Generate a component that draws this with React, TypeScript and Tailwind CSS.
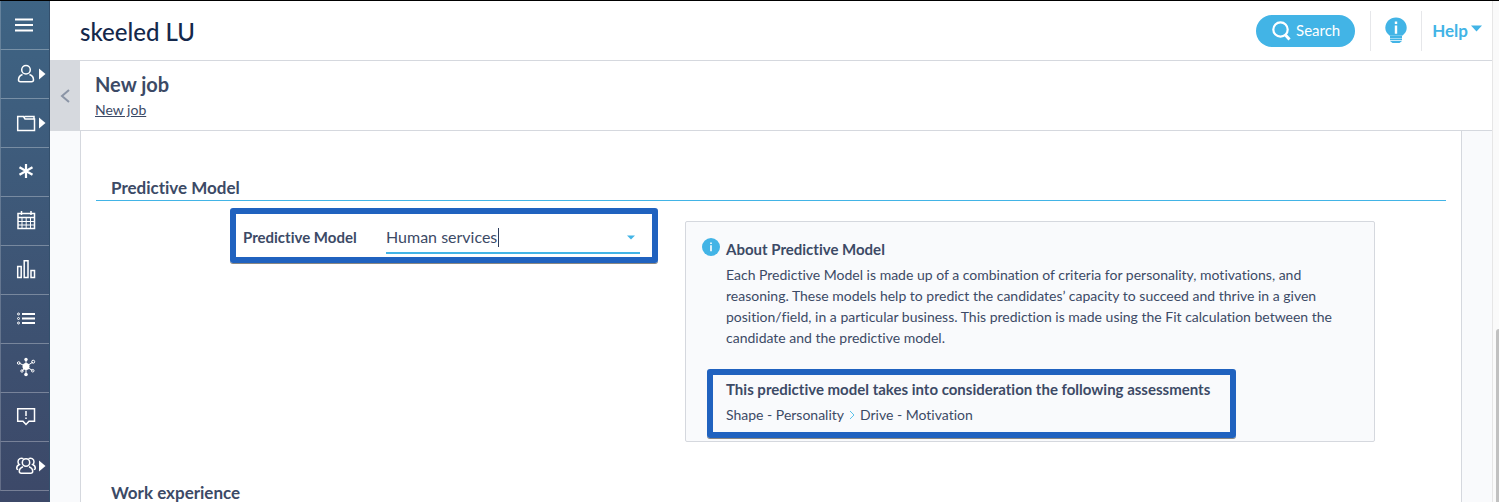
import { useState } from 'react';
import type { ReactNode } from 'react';

type NavItem = {
  label: string;
  icon: ReactNode;
  hasMenu?: boolean;
};

const NAV_ITEMS: NavItem[] = [
  {
    label: 'Menu',
    icon: <path d="M15 18.5h18M15 24h18M15 29.5h18" strokeWidth="2" />,
  },
  {
    label: 'Candidates',
    hasMenu: true,
    icon: (
      <>
        <circle cx="26" cy="19.700" r="4.3" />
        <path d="M22.5 24.5c-2.8 1-4 3-4 5.500c0 1.200.7 1.700 2 1.700h11c1.300 0 2-.5 2-1.700c0-2.500-1.200-4.500-4-5.500" />
      </>
    ),
  },
  {
    label: 'Jobs',
    hasMenu: true,
    icon: <path d="M17.700 17.500h5.800l1.500 2.500h9.500v11.500H17.700zM24.500 17.500h9.500v2.500" />,
  },
  {
    label: 'Favorites',
    icon: <path d="M26 16v14M19.500 19.200l13 7.600M32.500 19.200l-13 7.600" strokeWidth="2.200" />,
  },
  {
    label: 'Calendar',
    icon: (
      <>
        <path d="M18 16.500h16.500v15H18zM18 20.500h16.500M21.500 14v4M31 14v4" />
        <path d="M18 24.500h16.500M18 28h16.500M22 20.500v11M26.200 20.500v11M30.500 20.500v11" strokeWidth="1" />
      </>
    ),
  },
  {
    label: 'Statistics',
    icon: <path d="M17.700 20.500h3.500v11h-3.500zM24.200 14.700h3.800v16.800h-3.800zM31 24.500h3.500v7H31z" />,
  },
  {
    label: 'Lists',
    icon: (
      <>
        <path d="M22 19h13M22 23.500h13M22 28h13" strokeWidth="1.800" />
        <circle cx="18.500" cy="19" r="1" strokeWidth="1" />
        <circle cx="18.500" cy="23.500" r="1" strokeWidth="1" />
        <circle cx="18.500" cy="28" r="1" strokeWidth="1" />
      </>
    ),
  },
  {
    label: 'Network',
    icon: (
      <>
        <path d="M26 16v14M19 19l7 3.500l7-4.500M22 27l4-4.500l6.500 4" strokeWidth="1" />
        <circle cx="26" cy="22.500" r="3.500" fill="white" stroke="none" />
        <circle cx="26" cy="15.500" r="1.700" fill="white" stroke="none" />
        <circle cx="26" cy="30.500" r="1.800" fill="white" stroke="none" />
        <circle cx="18.700" cy="19" r="1.300" strokeWidth="1" />
        <circle cx="33.200" cy="17.700" r="1.500" strokeWidth="1" />
        <circle cx="32.700" cy="26.700" r="1.300" strokeWidth="1" />
        <circle cx="22" cy="27" r="1.200" strokeWidth="1" />
      </>
    ),
  },
  {
    label: 'Messages',
    icon: (
      <>
        <path d="M17.700 15.700h16.800v12.500H29l-3 3.300l-3-3.300h-5.300z" />
        <path d="M26 18v5M26 24.500v1.500" strokeWidth="1.500" />
      </>
    ),
  },
  {
    label: 'Team',
    hasMenu: true,
    icon: (
      <>
        <circle cx="26" cy="20.500" r="3.700" />
        <path d="M23 24.700c-2.500 1-3.700 2.500-3.700 4.600c0 1.400.6 2 2 2h9.400c1.400 0 2-.6 2-2c0-2.100-1.200-3.600-3.700-4.600" />
        <path d="M23.500 16.700c-2.500-1.300-5.500 0-5.500 3c0 1.300.5 2.200 1.300 2.800c-1.800.8-2.600 2-2.600 3.700c0 .9.500 1.300 1.500 1.300M28.500 16.700c2.500-1.300 5.500 0 5.500 3c0 1.300-.5 2.200-1.300 2.800c1.800.8 2.600 2 2.600 3.700c0 .9-.5 1.300-1.500 1.300" />
      </>
    ),
  },
];

function Sidebar() {
  return (
    <nav
      aria-label="Main"
      className="w-[50px] shrink-0 overflow-hidden border-r border-[#34506d] bg-gradient-to-b from-[#3e6484] to-[#3c4868]"
    >
      {NAV_ITEMS.map((item) => (
        <button
          key={item.label}
          type="button"
          aria-label={item.label}
          className="block h-[49px] w-full border-b border-l border-b-white/30 border-l-white/20"
        >
          <svg viewBox="1 0 48 48" className="h-12 w-12" fill="none" stroke="white" strokeWidth="1.500">
            {item.icon}
            {item.hasMenu && <path d="M39 18.500v11l6.500-5.500z" fill="white" stroke="none" />}
          </svg>
        </button>
      ))}
    </nav>
  );
}

function TopBar() {
  return (
    <header className="flex h-[60px] shrink-0 items-center border-b border-[#d5d8de] pr-[10px] pl-[30px]">
      <div className="grow pt-[2px] text-2xl font-medium text-[#14284b]">skeeled LU</div>
      <button
        type="button"
        className="mr-[15px] flex h-8 items-center gap-1 rounded-full bg-[#42b4e6] px-[15px] text-[15px] text-white"
      >
        <svg viewBox="0 0 21 21" className="h-[21px] w-[21px]" fill="none" stroke="white" strokeWidth="2.200">
          <circle cx="9.500" cy="9.500" r="7.200" />
          <path d="M14.500 15l4 4.500" strokeWidth="3" />
        </svg>
        Search
      </button>
      <button
        type="button"
        aria-label="Tips"
        className="flex h-10 w-[52px] items-center justify-center border-x border-[#e6e7ea]"
      >
        <svg viewBox="0 0 22 27" className="h-[27px] w-[22px]" fill="#42b4e6">
          <path d="M11 0.500C5 .5.300 5 .300 10.800c0 3.400 1.700 6 4.500 7.900h12.400c2.800-1.900 4.500-4.500 4.500-7.900C21.700 5 17 .5 11 .5z" />
          <path d="M5 19h12v2H5zM5 21.600h12v1.700H5zM5 24h12l-2.500 2h-7z" />
          <path d="M9.800 4.500h2.400V7H9.800zM9.800 8.500h2.400v8.300H9.800z" fill="white" />
        </svg>
      </button>
      <button type="button" className="ml-[10px] flex items-center gap-[3px] text-[17px] font-bold text-[#42b4e6]">
        Help
        <svg viewBox="0 0 11 7" className="mb-1 h-[7px] w-[11px]" fill="currentColor">
          <path d="M0 0.500h11L5.500 6.500z" />
        </svg>
      </button>
    </header>
  );
}

function PageHeading() {
  return (
    <div className="flex h-[70px] shrink-0 border-b border-[#d5d8de]">
      <button type="button" aria-label="Back" className="-mt-px -mb-px flex w-[30px] items-center justify-center bg-[#d6d9de]">
        <svg viewBox="0 0 10 14" className="h-[14px] w-[10px]" fill="none" stroke="#8b95a6" strokeWidth="2">
          <path d="M9 1L2 7l7 6" />
        </svg>
      </button>
      <div className="pt-[9px] pl-[15px]">
        <h1 className="text-xl leading-7 font-bold">New job</h1>
        <a href="#new-job" className="block text-sm leading-6 underline">
          New job
        </a>
      </div>
    </div>
  );
}

function ModelField() {
  const [model, setModel] = useState('Human services');

  return (
    <div className="mt-[7px] flex h-[55px] items-start rounded-[3px] border-6 border-[#2062bf] pt-2 pr-3 pl-[7px] shadow-[0_1px_0_#8a8782]">
      <label htmlFor="model" className="w-[143px] shrink-0 pt-px text-[15px] leading-7 font-bold">
        Predictive Model
      </label>
      <div className="flex h-[32px] grow items-center border-b-2 border-[#42b4e6]">
        <input
          id="model"
          value={model}
          onChange={(e) => setModel(e.target.value)}
          className="field-sizing-content text-base leading-6 outline-none"
        />
        <span className="ml-px h-[19px] w-px bg-[#2c3c5c]" />
        <svg viewBox="0 0 8 5" className="mr-[5px] ml-auto h-[5px] w-2" fill="#42b4e6">
          <path d="M0 0.500h8L4 4.500z" />
        </svg>
      </div>
    </div>
  );
}

function AboutCard() {
  return (
    <aside className="mt-5 h-[221px] rounded-xs border border-[#d5d8de] bg-[#f9fafc] pt-[15px] pr-5 pl-[15px] text-sm">
      <div className="flex gap-[6px]">
        <svg viewBox="0 0 18 18" className="mt-px ml-px h-[18px] w-[18px] shrink-0">
          <circle cx="9" cy="9" r="9" fill="#42b4e6" />
          <path d="M8.200 4.500h1.600v1.600H8.200zM8.200 7.300h1.600v6H8.200z" fill="white" />
        </svg>
        <div>
          <h3 className="pt-[2px] text-[15px] font-bold leading-[21px]">About Predictive Model</h3>
          <p className="mt-1 leading-[21px]">
            Each Predictive Model is made up of a combination of criteria for personality, motivations, and
            reasoning. These models help to predict the candidates’ capacity to succeed and thrive in a given
            position/field, in a particular business. This prediction is made using the Fit calculation between the
            candidate and the predictive model.
          </p>
        </div>
      </div>

      <div className="mt-[21px] ml-[6px] h-[69px] w-fit rounded-[3px] border-6 border-[#2062bf] pt-1 pr-5 pl-[13px] shadow-[0_1px_0_#8a8782]">
        <h3 className="text-[15px] leading-[21px] font-bold">
          This predictive model takes into consideration the following assessments
        </h3>
        <div className="mt-1 flex items-center gap-[5px] leading-[21px]">
          <span>Shape - Personality</span>
          <svg viewBox="0 0 6 10" className="h-[10px] w-[6px]" fill="none" stroke="#5cc3ea">
            <path d="M1 1l4 4l-4 4" />
          </svg>
          <span>Drive - Motivation</span>
        </div>
      </div>
    </aside>
  );
}

export default function App() {
  return (
    <div className="flex h-screen overflow-hidden border-t border-black bg-white font-[Lato,sans-serif] text-[#3c4a66] [font-variant-ligatures:none]">
      <Sidebar />

      <div className="flex min-w-0 grow flex-col">
        <TopBar />
        <PageHeading />
        <div className="min-h-0 grow overflow-hidden bg-[#f9fafc] px-[30px]">
          <main className="min-h-full border-x border-[#d5d8de] bg-white px-[15px]">
            <section>
              <h2 className="px-[15px] pt-[45px] text-[17px] leading-6 font-bold">Predictive Model</h2>
              <div className="grid grid-cols-[134fr_428fr_27fr_690fr_71fr] border-t border-[#42b4e6]">
                <div className="col-start-2">
                  <ModelField />
                </div>
                <div className="col-start-4">
                  <AboutCard />
                </div>
              </div>
            </section>
            <section>
              <h2 className="px-[15px] pt-[39px] text-[17px] leading-6 font-bold">Work experience</h2>
            </section>
          </main>
        </div>
      </div>

      {/* Scroll track */}
      <div className="flex w-[7px] shrink-0 flex-col items-end border-l border-[#e6e6e6] bg-[#fafafa] pt-[328px]">
        <div className="w-[3px] grow rounded-tl-sm bg-[#c1c1c1]" />
      </div>
    </div>
  );
}
